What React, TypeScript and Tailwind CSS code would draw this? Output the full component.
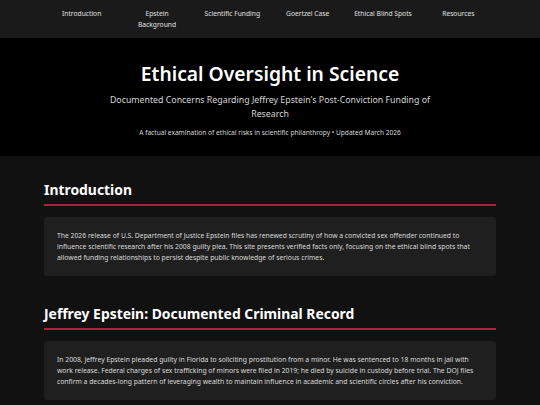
/**
 * Ethical Oversight in Science - landing page.
 */

const navItems = [
  { label: 'Introduction' },
  { label: 'Epstein', second: 'Background' },
  { label: 'Scientific Funding' },
  { label: 'Goertzel Case' },
  { label: 'Ethical Blind Spots' },
  { label: 'Resources' },
];

const sections = [
  {
    title: 'Introduction',
    body:
      'The 2026 release of U.S. Department of Justice Epstein files has renewed scrutiny of how a convicted sex offender continued to influence scientific research after his 2008 guilty plea. This site presents verified facts only, focusing on the ethical blind spots that allowed funding relationships to persist despite public knowledge of serious crimes.',
  },
  {
    title: 'Jeffrey Epstein: Documented Criminal Record',
    body:
      'In 2008, Jeffrey Epstein pleaded guilty in Florida to soliciting prostitution from a minor. He was sentenced to 18 months in jail with work release. Federal charges of sex trafficking of minors were filed in 2019; he died by suicide in custody before trial. The DOJ files confirm a decades-long pattern of leveraging wealth to maintain influence in academic and scientific circles after his conviction.',
  },
];

export default function App() {
  return (
    <div className="min-h-[405px] bg-[#111111] text-white font-['Noto_Sans','Open_Sans',sans-serif]">
      {/* Nav */}
      <nav className="bg-[#1a1a1a] h-[38px] pt-[8px]">
        <ul className="w-[452px] mx-auto flex">
          {navItems.map((item) => (
            <li
              key={item.label}
              className="flex-1 text-center text-[6.7px] leading-[11px] text-[#e0e0e0] whitespace-nowrap"
            >
              {item.label}
              {item.second && (
                <>
                  <br />
                  {item.second}
                </>
              )}
            </li>
          ))}
        </ul>
      </nav>

      {/* Hero */}
      <header className="bg-black h-[118px] flex flex-col items-center pt-[23px] text-center">
        <h1 className="text-[19.3px] leading-[26px] font-semibold">
          Ethical Oversight in Science
        </h1>
        <p className="mt-[6px] w-[330px] text-[8.8px] leading-[14.4px] text-[#d6d6d6]">
          Documented Concerns Regarding Jeffrey Epstein's Post-Conviction Funding of Research
        </p>
        <p className="mt-[6px] text-[6.6px] leading-[10px] text-[#d6d6d6]">
          A factual examination of ethical risks in scientific philanthropy • Updated March 2026
        </p>
      </header>

      {/* Sections */}
      <main className="w-[452px] mx-auto pt-[22px]">
        {sections.map((s) => (
          <section key={s.title} className="mb-[26px]">
            <h2 className="text-[13.9px] leading-[24px] font-bold pb-[2px]">{s.title}</h2>
            <div className="h-[2px] bg-[#b3203c]" />
            <div className="mt-[11px] bg-[#1f1f1f] rounded-[3px] px-[13px] py-[13px]">
              <p className="text-[6.8px] leading-[11px] text-[#dcdcdc]">{s.body}</p>
            </div>
          </section>
        ))}
      </main>
    </div>
  );
}
